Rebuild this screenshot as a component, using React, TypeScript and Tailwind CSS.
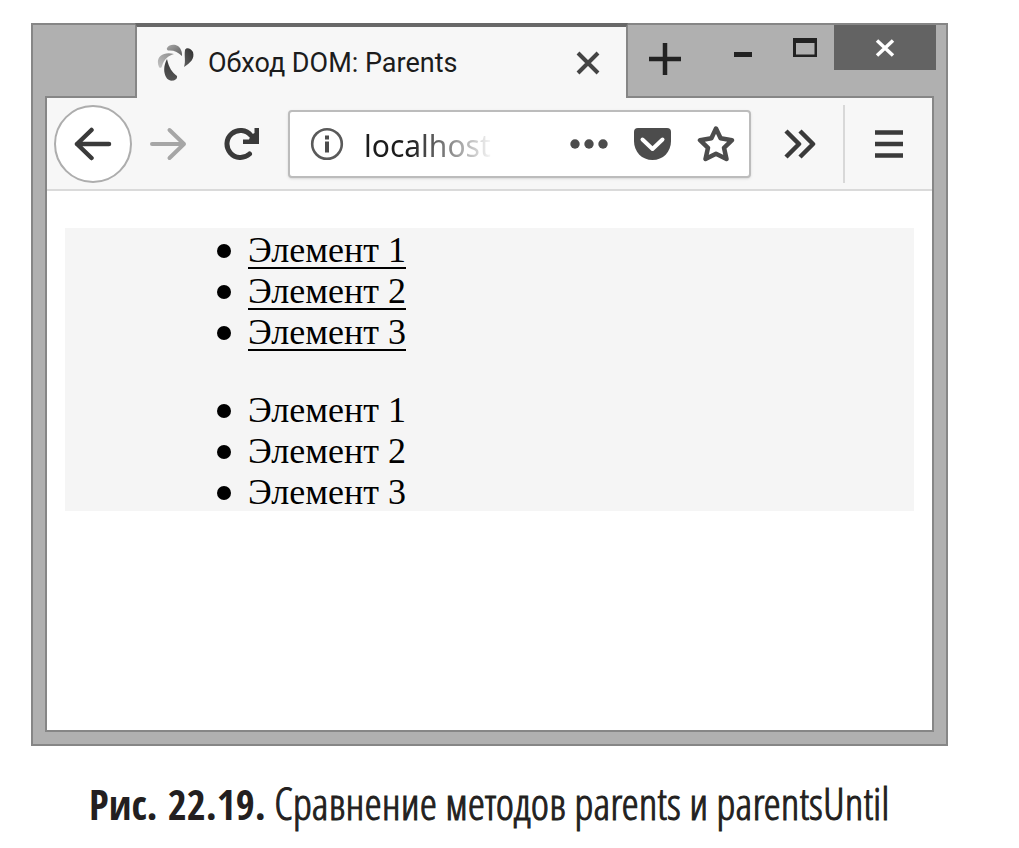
import { useState } from 'react';

const strokeProps = {
  fill: 'none',
  stroke: 'currentColor',
  strokeWidth: 4,
  'aria-hidden': true,
} as const;

function Favicon() {
  return (
    <svg width="38" height="38" viewBox="0 0 38 38" aria-hidden="true">
      <defs>
        <linearGradient id="petalTop" x1="0" y1="0" x2="1" y2="1">
          <stop offset="0" stopColor="#a8a8a8" />
          <stop offset="1" stopColor="#5c5c5c" />
        </linearGradient>
        <linearGradient id="petalLeft" x1="0" y1="1" x2="1" y2="0">
          <stop offset="0" stopColor="#c4c4c4" />
          <stop offset="1" stopColor="#8a8a8a" />
        </linearGradient>
        <linearGradient id="petalBottom" x1="0" y1="0" x2="0" y2="1">
          <stop offset="0" stopColor="#3a3a3a" />
          <stop offset="1" stopColor="#555555" />
        </linearGradient>
        <linearGradient id="petalRight" x1="1" y1="0" x2="0" y2="1">
          <stop offset="0" stopColor="#303030" />
          <stop offset="1" stopColor="#606060" />
        </linearGradient>
      </defs>
      <path d="M10 4C13-1 22 0 24 6C25 8 25 10 25 12C21 8 17 6 11 6.500C10 6 9.500 5 10 4Z" fill="url(#petalTop)" />
      <path d="M2 23C-2 14 5 7 17 10C11 12 7 15 5 22C4.500 24 3 24.500 2 23Z" fill="url(#petalLeft)" />
      <path d="M10 15C12 24 15 28 20 32C21 37 12 39 9 33C6 27 7 21 10 15Z" fill="url(#petalBottom)" />
      <path d="M27 23C29 17 27 12 28 6C29 3 34 4 36 8C38 15 33 19 27 23Z" fill="url(#petalRight)" />
    </svg>
  );
}

function TitleBar() {
  return (
    <header className="flex h-[71px] items-start pl-[102px] pr-[10px]">
      <div
        role="tab"
        aria-selected="true"
        className="relative -mt-0.5 flex h-[75px] min-w-0 basis-[493px] items-center border-x-2 border-t-4 border-x-[#868686] border-t-[#686868] bg-[#f7f7f7] pl-5 pr-[26px]"
      >
        <Favicon />
        <span className="ml-[13px] flex-1 whitespace-nowrap font-['Roboto',sans-serif] text-[27px] leading-8 text-[#1c1c1c]">
          Обход DOM: Parents
        </span>
        <button type="button" aria-label="Закрыть вкладку" className="text-[#444]">
          <svg width="24" height="24" viewBox="0 0 24 24" {...strokeProps}>
            <path d="M2 2L22 22M22 2L2 22" />
          </svg>
        </button>
      </div>
      <button type="button" aria-label="Новая вкладка" className="mt-[18px] ml-[21px] text-[#222]">
        <svg width="32" height="32" viewBox="0 0 32 32" {...strokeProps} strokeWidth={4.5}>
          <path d="M16 0V32M0 16H32" />
        </svg>
      </button>
      <div className="ml-auto flex items-start text-[#222]">
        <button type="button" aria-label="Свернуть" className="mt-[26px]">
          <svg width="20" height="6" viewBox="0 0 20 6" aria-hidden="true">
            <rect x="1" y="1" width="18" height="5" fill="currentColor" />
          </svg>
        </button>
        <button type="button" aria-label="Развернуть" className="mt-[13px] ml-10">
          <svg width="24" height="20" viewBox="0 0 24 20" aria-hidden="true">
            <path d="M0 0H24V19H0ZM3 5V16.500H21.500V5Z" fillRule="evenodd" fill="currentColor" />
          </svg>
        </button>
        <button
          type="button"
          aria-label="Закрыть окно"
          className="ml-[17px] flex h-[45px] w-[102px] items-center justify-center bg-[#636363] text-white"
        >
          <svg width="20" height="18" viewBox="0 0 20 18" {...strokeProps} strokeWidth={3.5}>
            <path d="M2 1.500L18 16.500M18 1.500L2 16.500" />
          </svg>
        </button>
      </div>
    </header>
  );
}

function AddressBar() {
  const [url, setUrl] = useState('localhost');
  return (
    <div className="ml-7 flex h-[68px] min-w-0 flex-1 items-center rounded-sm border-2 border-[#bcbcbc] bg-white pl-5 pr-3.5 text-[#4c4c4c] shadow-sm">
      <button type="button" aria-label="Сведения о сайте">
        <svg width="34" height="34" viewBox="0 0 34 34" aria-hidden="true">
          <circle cx="17" cy="17" r="14.800" fill="none" stroke="#5a5a5a" strokeWidth="2.600" />
          <rect x="15" y="8.500" width="4" height="4" fill="#4c4c4c" />
          <rect x="15" y="14.500" width="4" height="11" fill="#4c4c4c" />
        </svg>
      </button>
      <input
        aria-label="Адрес"
        value={url}
        onChange={(e) => setUrl(e.target.value)}
        className="ml-5 w-[130px] min-w-0 bg-transparent pt-1 font-['Noto_Sans',sans-serif] text-[30px] leading-10 text-[#1c1c1c] outline-none [mask-image:linear-gradient(to_right,black_35%,transparent)]"
      />
      <div className="ml-auto flex items-center">
        <button type="button" aria-label="Действия на странице">
          <svg width="38" height="10" viewBox="0 0 38 10" fill="currentColor" aria-hidden="true">
            <circle cx="5" cy="5" r="4.700" />
            <circle cx="19" cy="5" r="4.700" />
            <circle cx="33" cy="5" r="4.700" />
          </svg>
        </button>
        <button type="button" aria-label="Сохранить в Pocket" className="ml-[26px]">
          <svg width="37" height="32" viewBox="0 0 37 32" aria-hidden="true">
            <path d="M4 0H33Q37 0 37 4V13C37 24 29 32 18.500 32S0 24 0 13V4Q0 0 4 0Z" fill="currentColor" />
            <path d="M8.500 11.500L18.500 21L28.500 11.500" fill="none" stroke="white" strokeWidth="4" strokeLinecap="round" strokeLinejoin="round" />
          </svg>
        </button>
        <button type="button" aria-label="Добавить в закладки" className="ml-[26px]">
          <svg width="38" height="38" viewBox="0 0 38 38" {...strokeProps} strokeWidth={4.5} strokeLinejoin="round">
            <path d="M19 3.500L23.600 13.300L35 15.200L27 22.800L29.500 34L19 28.700L8.500 34L11 22.800L3 15.200L14.400 13.300Z" />
          </svg>
        </button>
      </div>
    </div>
  );
}

function Toolbar() {
  return (
    <nav className="flex h-[93px] items-center border-b-2 border-[#dadada] bg-[#f7f7f7] pl-[7px] pr-[29px] text-[#3a3a3a]">
      <button
        type="button"
        aria-label="Назад"
        className="flex size-[78px] shrink-0 items-center justify-center rounded-full border-2 border-[#adadad] bg-white"
      >
        <svg width="38" height="34" viewBox="0 0 38 34" {...strokeProps} strokeWidth={4.5} strokeLinecap="round" strokeLinejoin="round">
          <path d="M17.500 3L3 17L17.500 31M3 17H35" />
        </svg>
      </button>
      <button type="button" aria-label="Вперёд" className="ml-[17px] text-[#a6a6a6]">
        <svg width="38" height="34" viewBox="0 0 38 34" {...strokeProps} strokeLinecap="round" strokeLinejoin="round">
          <path d="M20.500 3L35 17L20.500 31M35 17H3" />
        </svg>
      </button>
      <button type="button" aria-label="Обновить" className="ml-[37px]">
        <svg width="36" height="34" viewBox="0 0 36 34" aria-hidden="true">
          <path d="M25.500 27A13.500 13.500 0 1 1 27 8.500" fill="none" stroke="currentColor" strokeWidth="5" strokeLinecap="round" />
          <path d="M35 1V17H19V12.500H25L27 8L30.500 6V1Z" fill="currentColor" />
        </svg>
      </button>
      <AddressBar />
      <button type="button" aria-label="Другие инструменты" className="ml-[33px]">
        <svg width="32" height="30" viewBox="0 0 32 30" {...strokeProps} strokeWidth={4.5} strokeLinejoin="round">
          <path d="M2 2L15 15L2 28M16 2L29 15L16 28" />
        </svg>
      </button>
      <div className="ml-[27px] h-[78px] w-0.5 bg-[#d8d8d8]" />
      <button type="button" aria-label="Меню" className="ml-[30px]">
        <svg width="28" height="28" viewBox="0 0 28 28" {...strokeProps} strokeWidth={4.5}>
          <path d="M0 2.500H28M0 14H28M0 25.500H28" />
        </svg>
      </button>
    </nav>
  );
}

const items = ['Элемент 1', 'Элемент 2', 'Элемент 3'];

function ItemList({ underlined = false }: { underlined?: boolean }) {
  return (
    <ul>
      {items.map((item) => (
        <li key={item} className="flex h-[41px] items-center pt-1">
          <span className="mr-[17px] size-3.5 rounded-full bg-black" />
          <span className={underlined ? 'underline decoration-2 underline-offset-5' : ''}>{item}</span>
        </li>
      ))}
    </ul>
  );
}

export default function App() {
  return (
    <main className="min-h-screen bg-white pt-[23px] pr-[71px] pl-[31px]">
      <figure>
        <section className="border-2 border-[#868686] bg-[#b0b0b0]">
          <TitleBar />
          <div className="px-3 pb-3">
            <div className="border-2 border-[#868686] bg-white">
              <Toolbar />
              <div className="min-h-[539px] px-[18px] pt-[37px]">
                <div className="space-y-[37px] bg-[#f5f5f5] pl-[152px] font-['Liberation_Serif',serif] text-[36px] leading-[41px] text-black">
                  <ItemList underlined />
                  <ItemList />
                </div>
              </div>
            </div>
          </div>
        </section>
        <figcaption className="mt-7 pl-[58px] font-['Open_Sans_Condensed_Light',sans-serif] text-[44px] leading-[58px] font-light whitespace-nowrap text-[#231f20] [-webkit-text-stroke:1px_#231f20]">
          <strong className="font-['Open_Sans_Condensed',sans-serif] text-[41px] font-bold [-webkit-text-stroke:0]">
            Рис. 22.19.
          </strong>{' '}
          Сравнение методов parents и parentsUntil
        </figcaption>
      </figure>
    </main>
  );
}
